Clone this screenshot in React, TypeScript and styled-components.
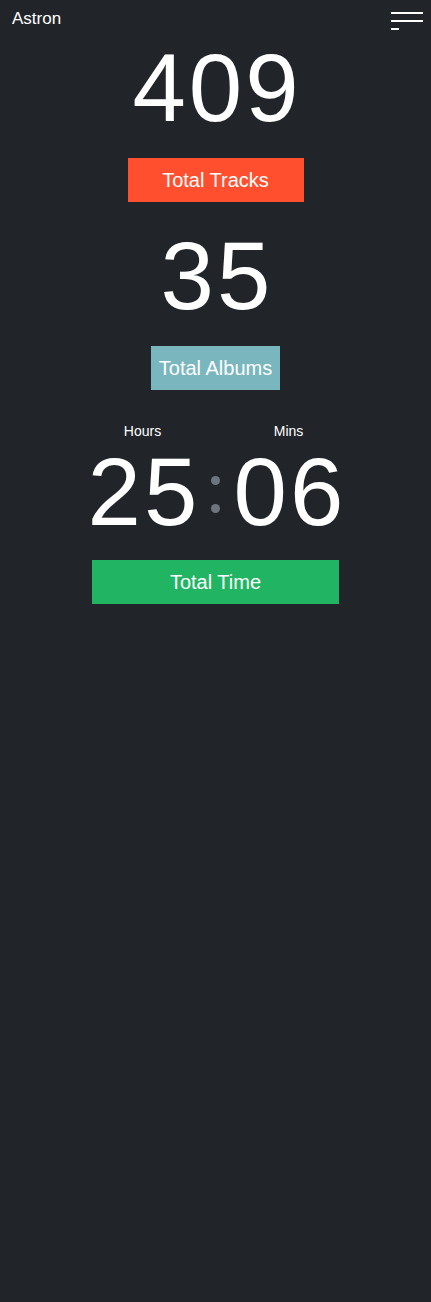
import React from "react";
import styled, { createGlobalStyle } from "styled-components";

const GlobalStyle = createGlobalStyle`
  html, body {
    margin: 0;
    padding: 0;
    background: #212529;
    min-height: 100%;
  }
  body {
    font-family: "Liberation Sans", Arial, sans-serif;
    color: #ffffff;
  }
  * { box-sizing: border-box; }
`;

const Page = styled.div`
  min-height: 1302px;
  background: #212529;
`;

const NavBar = styled.nav`
  display: flex;
  justify-content: space-between;
  align-items: flex-start;
  padding: 8px 8px 0 12px;
  height: 30px;
`;

const Brand = styled.a`
  font-size: 17px;
  line-height: 22px;
  color: #ffffff;
  text-decoration: none;
`;

const MenuToggle = styled.button`
  display: flex;
  flex-direction: column;
  align-items: flex-start;
  gap: 6px;
  margin-top: 4px;
  padding: 0;
  border: none;
  background: transparent;
  width: 32px;
`;

const MenuLine = styled.span<{ $w: number }>`
  display: block;
  height: 2px;
  width: ${(p) => p.$w}px;
  background: #ffffff;
`;

const Main = styled.main`
  display: flex;
  flex-direction: column;
  align-items: center;
`;

const StatBlock = styled.section`
  display: flex;
  flex-direction: column;
  align-items: center;
  margin-bottom: 16px;
`;

const BigNumber = styled.div`
  font-size: 96px;
  font-weight: 300;
  line-height: 115.2px;
  letter-spacing: 3px;
  padding-left: 3px;
  color: #ffffff;
`;

const Badge = styled.div<{ $bg: string; $w: number; $mt?: number }>`
  display: flex;
  align-items: center;
  justify-content: center;
  height: 44px;
  width: ${(p) => p.$w}px;
  margin-top: ${(p) => p.$mt ?? 13}px;
  background: ${(p) => p.$bg};
  color: #ffffff;
  font-size: 20px;
`;

const TimerBlock = styled.section`
  display: flex;
  flex-direction: column;
  align-items: center;
  margin-top: 18px;
`;

const TimerGrid = styled.div`
  display: grid;
  grid-template-columns: 110px 36px 110px;
  grid-template-rows: 14px 107px;
  justify-items: center;
`;

const UnitLabel = styled.div<{ $col: number }>`
  grid-row: 1;
  grid-column: ${(p) => p.$col};
  font-size: 14px;
  line-height: 14px;
  color: #ffffff;
`;

const TimeDigits = styled.div<{ $col: number }>`
  grid-row: 2;
  grid-column: ${(p) => p.$col};
  font-size: 96px;
  font-weight: 300;
  line-height: 107px;
  letter-spacing: 3px;
  padding-left: 3px;
  color: #ffffff;
`;

const Colon = styled.div`
  grid-row: 2;
  grid-column: 2;
  display: flex;
  flex-direction: column;
  justify-content: center;
  align-items: center;
  gap: 19px;
  padding-top: 5px;
`;

const Dot = styled.span`
  display: block;
  width: 9px;
  height: 9px;
  border-radius: 50%;
  background: #6c757d;
`;

export default function App() {
  return (
    <Page>
      <GlobalStyle />
      <NavBar>
        <Brand href="#">Astron</Brand>
        <MenuToggle aria-label="Menu">
          <MenuLine $w={32} />
          <MenuLine $w={32} />
          <MenuLine $w={8} />
        </MenuToggle>
      </NavBar>
      <Main>
        <StatBlock>
          <BigNumber>409</BigNumber>
          <Badge $bg="#ff4f2e" $w={176}>Total Tracks</Badge>
        </StatBlock>
        <StatBlock>
          <BigNumber>35</BigNumber>
          <Badge $bg="#79b6bd" $w={129}>Total Albums</Badge>
        </StatBlock>
        <TimerBlock>
          <TimerGrid>
            <UnitLabel $col={1}>Hours</UnitLabel>
            <UnitLabel $col={3}>Mins</UnitLabel>
            <TimeDigits $col={1}>25</TimeDigits>
            <Colon>
              <Dot />
              <Dot />
            </Colon>
            <TimeDigits $col={3}>06</TimeDigits>
          </TimerGrid>
          <Badge $bg="#20b463" $w={247} $mt={15}>Total Time</Badge>
        </TimerBlock>
      </Main>
    </Page>
  );
}
